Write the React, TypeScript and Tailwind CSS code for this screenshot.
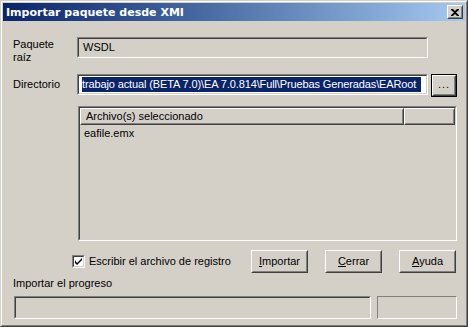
import React from "react";

function Sunken({ className = "", inner = "", children }: { className?: string; inner?: string; children?: React.ReactNode }) {
  return (
    <div className={`border border-[#808080] border-r-white border-b-white ${className}`}>
      <div className={`h-full border border-[#404040] border-r-[#d4d0c8] border-b-[#d4d0c8] ${inner}`}>{children}</div>
    </div>
  );
}

function Btn({ children, className = "" }: { children: React.ReactNode; className?: string }) {
  return (
    <div className={`border border-white border-r-[#404040] border-b-[#404040] ${className}`}>
      <div className="h-full border border-[#d4d0c8] border-r-[#808080] border-b-[#808080] flex items-center justify-center">
        {children}
      </div>
    </div>
  );
}

export default function App() {
  return (
    <div className="w-[468px] h-[327px] border border-[#d4d0c8] border-r-[#404040] border-b-[#404040] bg-[#d4d0c8] font-['Liberation_Sans',Arial,sans-serif] text-[11px] leading-[13px] text-black select-none">
      <div className="h-full border border-white border-r-[#808080] border-b-[#808080] p-px flex flex-col">
        {/* Title bar */}
        <div className="h-[18px] flex items-center justify-between pl-[3px] pr-[2px] bg-gradient-to-r from-[#0a246a] to-[#a6caf0]">
          <span className="text-white font-bold text-[11px] font-['DejaVu_Sans',sans-serif]">Importar paquete desde XMI</span>
          <div className="w-[16px] h-[14px] border border-white border-r-[#404040] border-b-[#404040]">
            <div className="h-full border border-[#d4d0c8] border-r-[#808080] border-b-[#808080] bg-[#d4d0c8] flex items-center justify-center">
              <svg width="8" height="7" viewBox="0 0 8 7">
                <path d="M0 0h2l2 2 2-2h2v1L5 3.5 8 6v1H6L4 5 2 7H0V6l3-2.5L0 1z" fill="black" />
              </svg>
            </div>
          </div>
        </div>

        {/* Body */}
        <div className="flex-1 flex flex-col pl-[10px]">
          {/* Row 1 */}
          <div className="flex items-start mt-[16px]">
            <div className="w-[64px] mt-[1px] leading-[13px]">Paquete<br />raíz</div>
            <Sunken className="w-[351px] h-[21px]" inner="flex items-center pl-[4px]">
              <span>WSDL</span>
            </Sunken>
          </div>

          {/* Row 2 */}
          <div className="flex items-start mt-[10px]">
            <div className="w-[64px] h-[21px] flex items-center">Directorio</div>
            <Sunken className="w-[351px] h-[21px]" inner="bg-white flex items-center pl-[3px]">
              <div className="w-[339px] overflow-hidden whitespace-nowrap bg-[#0a246a] text-white leading-[15px] tracking-[-0.12px]">
                trabajo actual (BETA 7.0)\EA 7.0.814\Full\Pruebas Generadas\EARoot
              </div>
            </Sunken>
            <div className="ml-[3px] w-[26px] h-[23px] border border-black">
              <Btn className="h-full">
                <span className="tracking-[1px] -mt-[2px]">...</span>
              </Btn>
            </div>
          </div>

          {/* List view */}
          <Sunken className="ml-[65px] mt-[9px] w-[379px] h-[135px]" inner="flex flex-col">
            <div className="flex h-[17px]">
              <Btn className="w-[325px] h-full">
                <span className="w-full pl-[4px] text-left">Archivo(s) seleccionado</span>
              </Btn>
              <Btn className="w-[51px] h-full">
                <span />
              </Btn>
            </div>
            <div className="pl-[4px] pt-[2px]">eafile.emx</div>
          </Sunken>

          {/* Checkbox + buttons */}
          <div className="flex items-center mt-[9px] h-[23px]">
            <div className="ml-[59px] w-[13px] h-[13px] border border-[#808080] border-r-white border-b-white">
              <div className="h-full border border-[#404040] border-r-[#d4d0c8] border-b-[#d4d0c8] bg-white flex items-center justify-center">
                <svg width="7" height="7" viewBox="0 0 7 7">
                  <path d="M0 2v3l2 2 5-5V-0L2 5z" fill="black" />
                </svg>
              </div>
            </div>
            <span className="ml-[4px]">Escribir el archivo de registro</span>
            <div className="ml-auto mr-[9px] flex gap-[17px]">
              <Btn className="w-[57px] h-[23px]">
                <span><u>I</u>mportar</span>
              </Btn>
              <Btn className="w-[57px] h-[23px]">
                <span><u>C</u>errar</span>
              </Btn>
              <Btn className="w-[57px] h-[23px]">
                <span><u>A</u>yuda</span>
              </Btn>
            </div>
          </div>

          <div className="mt-[4px] h-[13px]">Importar el progreso</div>

          <div className="flex mt-[6px] ml-[1px]">
            <Sunken className="w-[357px] h-[23px]" />
            <div className="ml-[6px] w-[80px] h-[23px] border border-[#808080] border-r-white border-b-white" />
          </div>
        </div>
      </div>
    </div>
  );
}
